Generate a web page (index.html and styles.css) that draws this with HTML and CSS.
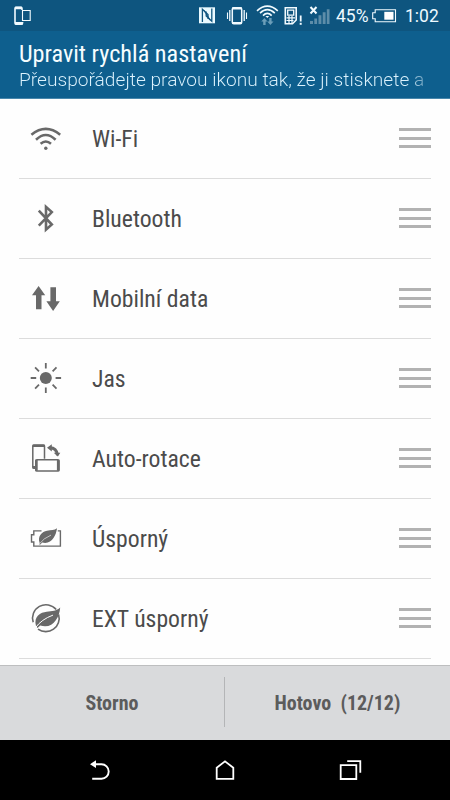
FILE: index.html
```html
<!DOCTYPE html>
<html lang="cs">
<head>
<meta charset="utf-8">
<title>Upravit rychlá nastavení</title>
<link rel="stylesheet" href="styles.css">
</head>
<body>
<div class="phone">
  <div class="status">
    <svg class="status-icons" width="450" height="31" viewBox="0 0 450 31" fill="none" stroke="#f2fbff">
      <path d="M22 10V8.5Q22 7.3 21 7.3H16Q15 7.3 15 8.5V23Q15 24.2 16 24.2H21.5Q22.6 24.2 22.6 22" stroke-width="1.6"/>
      <path d="M15 8h7M15 23.3h8" stroke-width="2.4"/>
      <path d="M22.5 10.5h7.7v10h-7.7z" stroke-width="1.1"/>
      <path d="M199 7.3h16v16h-16z" fill="#eafaff" stroke="none"/>
      <path d="M202.4 22V9.2L208 14.5V19M206.2 11.5V16L211.8 21.3V8.5" stroke="#0e557f" stroke-width="1.3"/>
      <path d="M204.2 10.5L210 20" stroke="#0e557f" stroke-width="1.1"/>
      <rect x="232.3" y="7.7" width="9.4" height="16" rx="1.5" stroke-width="1.5"/>
      <path d="M232.3 8.4h9.4M232.3 23h9.4" stroke-width="2.2"/>
      <path d="M229.8 10v11M244.2 10v11" stroke-width="1.3"/><path d="M227.5 12.5v6.5M246.5 12.5v6.5" stroke-width="1.1"/>
      <g stroke-width="1.6"><path d="M257 10.8Q267.3 1.5 277.8 10.8"/><path d="M260 13.2Q267.3 6.2 274.8 13.2"/><path d="M263 15.6Q267.3 11.2 271.7 15.6"/></g>
      <path d="M265.4 16h3.8l-1.9 2z" fill="#f2fbff" stroke="none"/>
      <path d="M264.4 18l-3.1 3.6h1.9V25h2.4v-3.4h1.9zM270.4 25l3.1-3.6h-1.9V18h-2.4v3.4h-1.9z" fill="#6c9eb9" stroke="none"/>
      <path d="M285.3 7.8H296.2V20L292.5 23.8H285.3z" stroke-width="1.6"/>
      <path d="M287.7 10.2h6v5h-6z" stroke-width="1.3"/><path d="M286.5 17.8h8.5M286.5 20.5h7M289 16v7M292 16v7" stroke-width="1.2"/>
      <path d="M300.7 15.5v6" stroke-width="1.8"/><path d="M300.7 22.8v2" stroke-width="2"/>
      <path d="M310.5 7l6 6.5M316.5 7l-6 6.5" stroke-width="2"/>
      <path d="M310 21h3v3h-3zM314.3 18.5h2.8V24h-2.8zM318.5 15.2h2.9V24h-2.9zM322.7 12.2h2.9V24h-2.9zM326.8 9.3h2.7V24h-2.7z" fill="#5d8da9" stroke="none"/>
      <path d="M375.2 9.7H395.5V21.7H375.2V18.7H372.7V12.7H375.2z" stroke-width="1.1"/>
      <path d="M384.3 11.8h9.2v7.9h-9.2z" fill="#fff" stroke="none"/>
    </svg>
    <span class="percent">45%</span>
    <span class="clock">1:02</span>
  </div>
  <header class="header">
    <h1 class="title">Upravit rychlá nastavení</h1>
    <p class="subtitle">Přeuspořádejte pravou ikonu tak, že ji stisknete a</p>
  </header>
  <main class="list">
    <div class="row">
      <svg class="icon" viewBox="0 -.5 32 32" fill="none" stroke="#696969" stroke-width="2.6"><path d="M1.4 12.2Q15.8 .6 30.2 12.2M6 17.2Q15.8 7.8 25.6 17.2M10.6 21.2Q15.8 16.8 21 21.2"/><circle cx="15.8" cy="25.7" r="1.7" fill="#696969" stroke="none"/></svg>
      <span class="label">Wi-Fi</span><span class="handle"></span>
    </div>
    <div class="row">
      <svg class="icon" viewBox="0 -.5 32 32" fill="none" stroke="#696969" stroke-width="2.6"><path d="M8.8 8.2L21.8 22L16 27.2V4.4L21.8 9.6L8.8 23.2"/></svg>
      <span class="label">Bluetooth</span><span class="handle"></span>
    </div>
    <div class="row">
      <svg class="icon" viewBox="0 -.5 32 32" fill="#696969"><path d="M8.6 3.4L15.2 12.8H11.5V26.7H6V12.8H2zM23.1 28.4L29.8 18.8H26V4.8H20.4V18.8H16.4z"/></svg>
      <span class="label">Mobilní data</span><span class="handle"></span>
    </div>
    <div class="row">
      <svg class="icon" viewBox="0 .2 32 32" fill="none" stroke="#696969" stroke-width="1.8"><circle cx="15.8" cy="16.2" r="6" fill="#696969" stroke="none"/><path d="M15.8 1.2v5.5M15.8 25.8v5.5M.7 16.2h5.5M25.6 16.2h5.5M5.1 5.6l3.9 3.9M22.6 22.9l3.9 3.9M26.5 5.6l-3.9 3.9M9 22.9l-3.9 3.9"/></svg>
      <span class="label">Jas</span><span class="handle"></span>
    </div>
    <div class="row">
      <svg class="icon" viewBox="0 .2 32 32" fill="none" stroke="#696969"><path d="M14.5 17V4.2Q14.5 3.2 13.5 3.2H3.8Q2.8 3.2 2.8 4.2V25.3Q2.8 26.5 3.8 26.5H5" stroke-width="1.5"/><path d="M2.7 4.1h12M2.5 25.4h3.5" stroke-width="2.4"/><rect x="5.8" y="17.9" width="23.2" height="11.4" rx="1.2" stroke-width="1.5"/><path d="M6.4 18v11M28.2 18v11" stroke-width="2.6"/><path d="M20 6Q26.5 6 27.6 13.5" stroke-width="3"/><path d="M21.8 2.4V9.6L17 6zM23.7 11h6.6l-2.4 3.8z" fill="#696969" stroke="none"/></svg>
      <span class="label">Auto-rotace</span><span class="handle"></span>
    </div>
    <div class="row">
      <svg class="icon" viewBox="0 -.5 32 32" fill="none" stroke="#696969" stroke-width="1.4"><path d="M11.5 8.4H3.8V12.2H1.5V19.5H3.8V23.6H30.4V8.4H27.8"/><path d="M9.6 20.2C7.3 13.8 12 9 17 8.2C21 7.6 24.5 8 27 5.8C26 13.5 21.5 22.4 12.2 20L9.6 22.7z" fill="#696969" stroke="none"/><path d="M9.5 21.2Q13.5 15.8 21 12.6" stroke="#fff" stroke-width=".6"/></svg>
      <span class="label">Úsporný</span><span class="handle"></span>
    </div>
    <div class="row">
      <svg class="icon" viewBox="0 -.5 32 32" fill="none" stroke="#696969" stroke-width="1.6"><path d="M26.2 7A13.4 13.4 0 0 0 3.2 19.8M8 26.7A13.4 13.4 0 0 0 28.6 12"/><path d="M6 23.5C3.4 13.8 10.5 9.8 16.7 9.2C22 8.6 26.5 8.6 30.2 5C29.4 15.6 22.5 27 10.2 23L7.5 25.4z" fill="#696969" stroke="none"/><path d="M5.3 25.4Q11.5 16.8 23 12.6" stroke="#fff" stroke-width="1"/></svg>
      <span class="label">EXT úsporný</span><span class="handle"></span>
    </div>
  </main>
  <footer class="actions">
    <button class="action">Storno</button>
    <button class="action">Hotovo&nbsp; (12/12)</button>
  </footer>
  <nav class="nav">
    <svg width="24" height="24" viewBox="0 0 24 24" fill="none" stroke="#fff" stroke-width="1.9"><path d="M5 6.3H13.5A7.2 7.2 0 0 1 13.5 20.7H4.2"/><path d="M8 2.2V9.9L2 6.2z" fill="#fff" stroke="none"/></svg>
    <svg width="24" height="24" viewBox="0 0 24 24" fill="none" stroke="#fff" stroke-width="1.8"><path d="M3.7 20.8V9.7L12 3.4L20.3 9.7V20.8z"/></svg>
    <svg width="24" height="24" viewBox="0 0 24 24" fill="none" stroke="#fff" stroke-width="1.8"><path d="M2.7 7.2H18.3V21H2.7zM9.2 3.2H22.3V14.8"/></svg>
  </nav>
</div>
</body>
</html>
```
FILE: styles.css
```css
* { box-sizing: border-box; }
body { margin: 0; font-family: "Roboto Condensed", Roboto, sans-serif; }
.phone { width: 450px; height: 800px; display: flex; flex-direction: column; background: #fefefe; overflow: hidden; }
.status { position: relative; flex: none; height: 31px; background: #0e557f; color: #eefaff; font: 17.5px/31px Roboto, sans-serif; display: flex; justify-content: flex-end; padding: 1px 10px 0 0; }
.status-icons { position: absolute; left: 0; top: 0; }
.percent { width: 65px; margin-right: 4px; }
.clock { width: 35px; }
.header { flex: none; height: 68px; background: #0e5f8e; color: #f5fdff; padding: 8px 19px 0; border-bottom: 1px solid #4887ac; }
.title { margin: 0; font-size: 24.25px; line-height: 30px; font-weight: 400; font-stretch: 75%; white-space: nowrap; }
.subtitle { margin: 0; width: 407px; font: 300 19.15px/22px Roboto, sans-serif; white-space: nowrap; color: transparent; background: linear-gradient(90deg, #dcf2fd 95%, #6299b9) text; }
.list { flex: 1; padding: 0 19px; }
.row { height: 80px; display: flex; align-items: center; border-bottom: 1px solid #dcdcdc; padding-left: 11px; }
.icon { width: 32px; height: 32px; flex: none; margin: 0 30px 1px 0; }
.label { flex: 1; padding-top: 2px; font-size: 23.7px; line-height: 31px; font-stretch: 75%; color: #4b4b4b; }
.handle { width: 32px; height: 20px; margin-bottom: 1px; border: solid #b2b2b2; border-width: 3px 0; background: linear-gradient(#b2b2b2, #b2b2b2) center / 100% 3px no-repeat; }
.actions { flex: none; height: 75px; display: flex; background: #d9dadc; border-top: 1px solid #bdbebf; padding: 11px 0 13px; }
.action { flex: 1; border: 0; background: none; font: 700 20px/30px "Roboto Condensed", Roboto, sans-serif; font-stretch: 75%; color: #5c5c5c; padding: 2px 0 0; }
.action + .action { flex: 0 0 226px; border-left: 1px solid #b4b5b7; }
.nav { flex: none; height: 60px; background: #000; display: flex; align-items: center; justify-content: space-between; padding: 0 88px; }
```
